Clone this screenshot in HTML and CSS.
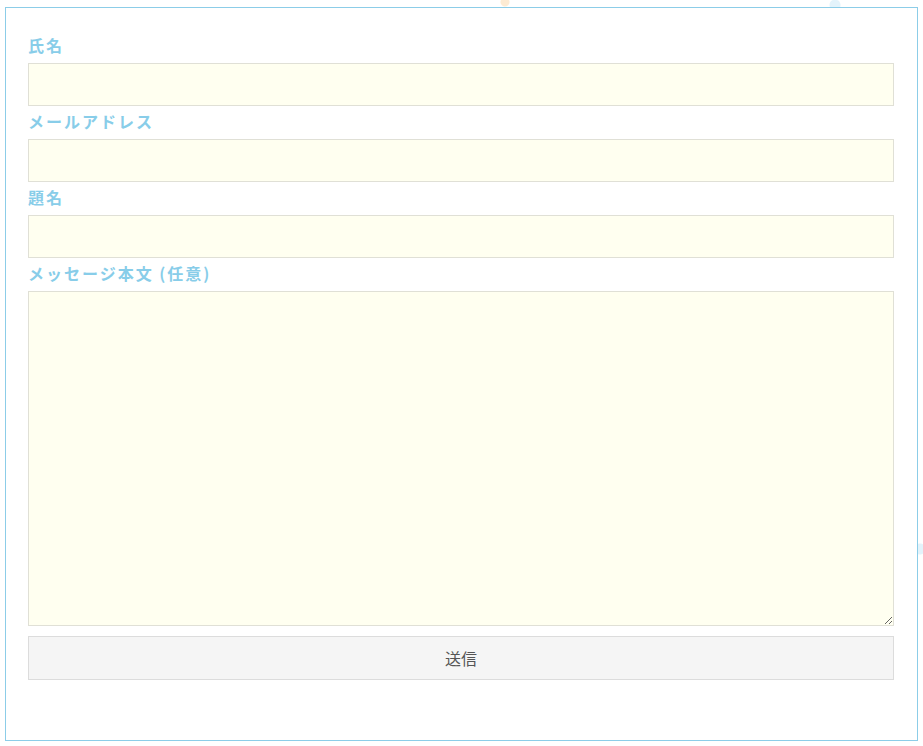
FILE: index.html
```html
<!DOCTYPE html>
<html lang="ja">
<head>
<meta charset="utf-8">
<title>お問い合わせ</title>
<link rel="stylesheet" href="styles.css">
</head>
<body>
<div class="page">
  <form class="contact">
    <label class="label" for="name">氏名</label>
    <input class="field" id="name" type="text">
    <label class="label" for="mail">メールアドレス</label>
    <input class="field" id="mail" type="email">
    <label class="label" for="subject">題名</label>
    <input class="field" id="subject" type="text">
    <label class="label" for="body">メッセージ本文 (任意)</label>
    <textarea class="field area" id="body"></textarea>
    <button class="submit" type="button">送信</button>
  </form>
</div>
</body>
</html>
```

FILE: styles.css
```css
html, body {
  margin: 0;
  padding: 0;
  background: #fff;
}
body {
  font-family: "Noto Sans CJK JP", "Noto Sans", sans-serif;
  background:
    radial-gradient(circle at 505px 2px, #fdebd3 0 4px, transparent 5px),
    radial-gradient(circle at 835px 5px, #e3f3fb 0 5px, transparent 6px),
    radial-gradient(circle at 920px 549px, #e3f3fb 0 5px, transparent 6px),
    #fff;
  min-height: 746px;
}
.page {
  padding: 7px 5px 5px 5px;
}
.contact {
  display: flex;
  flex-direction: column;
  border: 1px solid #8ccde8;
  background: #fff;
  padding: 22px 23px 60px 22px;
  height: 734px;
  box-sizing: border-box;
}
.label {
  display: block;
  margin: 3px 0 6px;
  font-size: 16px;
  line-height: 24px;
  font-weight: bold;
  letter-spacing: 2px;
  color: #88cde9;
}
.field {
  display: block;
  box-sizing: border-box;
  width: 100%;
  height: 43px;
  margin: 0;
  border: 1px solid #e0e0d6;
  background: #fffff0;
  font-family: inherit;
  font-size: 14px;
  padding: 4px 8px;
  outline: none;
}
.area {
  height: 335px;
  resize: vertical;
}
.submit {
  display: block;
  box-sizing: border-box;
  width: 100%;
  height: 44px;
  margin: 10px 0 0;
  border: 1px solid #dcdcdc;
  background: #f5f5f5;
  color: #555;
  font-family: inherit;
  font-size: 16px;
  cursor: pointer;
}
```
